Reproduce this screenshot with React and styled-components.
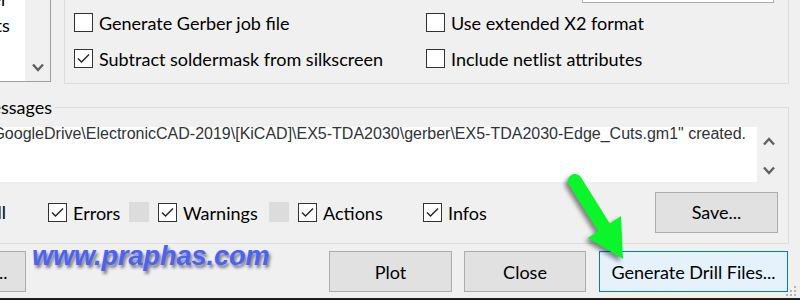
import React from 'react';
import styled, { createGlobalStyle } from 'styled-components';

const GlobalStyle = createGlobalStyle`
	html, body {
		margin: 0;
		padding: 0;
	}
	body {
		background: #f0f0f0;
		font-family: Lato, "Noto Sans", sans-serif;
		overflow: hidden;
	}
`;

const Dialog = styled.div`
	position: relative;
	width: 800px;
	height: 300px;
	box-sizing: border-box;
	border-bottom: 2px solid #1c1c1c;
	background: #f0f0f0;
	overflow: hidden;
	font-size: 18px;
	color: #000;
`;

const TopRow = styled.div`
	display: flex;
	align-items: flex-start;
	height: 84px;
`;

const ListBox = styled.div`
	flex: none;
	display: flex;
	width: 51px;
	height: 82px;
	box-sizing: border-box;
	border-right: 1px solid #a0a0a0;
	border-bottom: 1px solid #a0a0a0;
	background: #fff;
`;

const ListItems = styled.div`
	flex: 1;
	overflow: hidden;
`;

const ListItem = styled.div`
	margin-left: ${(props) => props.$shift}px;
	margin-top: ${(props) => props.$top || 0}px;
	height: 26px;
	line-height: 26px;
	white-space: nowrap;
`;

const ListScroll = styled.div`
	width: 25px;
	background: #f0f0f0;
	display: flex;
	flex-direction: column;
	justify-content: flex-end;
	align-items: center;
	padding-bottom: 9px;
	box-sizing: border-box;
`;

const Options = styled.div`
	flex: none;
	display: flex;
	flex-direction: column;
	width: 725px;
	height: 84px;
	margin-left: 13px;
	box-sizing: border-box;
	border: 1px solid #dcdcdc;
	border-top: none;
`;

const InputStub = styled.div`
	width: 192px;
	height: 3px;
	margin-left: 517px;
	box-sizing: border-box;
	border: 1px solid #adadad;
	border-top: none;
	background: #fff;
`;

const OptionGrid = styled.div`
	display: grid;
	grid-template-columns: 352px auto;
	row-gap: 17px;
	margin-left: 9px;
	margin-top: 10px;
`;

const CheckRow = styled.label`
	display: flex;
	align-items: center;
	gap: 6px;
	height: 19px;
	line-height: 19px;
	white-space: nowrap;
	width: ${(props) => (props.$width ? `${props.$width}px` : 'auto')};
	flex: none;

	span.text {
		padding-top: 2px;
	}
`;

const Box = styled.span`
	flex: none;
	display: flex;
	align-items: center;
	justify-content: center;
	width: 19px;
	height: 19px;
	box-sizing: border-box;
	border: 1px solid #333;
	background: #fff;
`;

const Messages = styled.div`
	position: relative;
	width: 829px;
	height: 137px;
	margin-top: 23px;
	margin-left: -40px;
	box-sizing: border-box;
	border: 1px solid #dcdcdc;
`;

const Caption = styled.span`
	position: absolute;
	left: 14px;
	top: -12px;
	padding-right: 3px;
	line-height: 22px;
	background: #f0f0f0;
`;

const LogRow = styled.div`
	display: flex;
	height: 55px;
	margin-top: 19px;
`;

const LogText = styled.div`
	flex: 1;
	display: flex;
	justify-content: flex-end;
	overflow: hidden;
	padding-right: 11px;
	background: #fff;
	font-family: "Liberation Sans", Arial, sans-serif;
	font-size: 16px;
	line-height: 12px;
	color: #2e3338;
	white-space: nowrap;

	span {
		flex: none;
		padding-top: 1px;
	}
`;

const LogScroll = styled.div`
	width: 31px;
	display: flex;
	flex-direction: column;
	align-items: center;
	gap: 20px;
	padding-top: 10px;
	padding-right: 7px;
	box-sizing: border-box;
`;

const FilterRow = styled.div`
	display: flex;
	align-items: center;
	height: 60px;
`;

const AllLabel = styled.span`
	flex: none;
	width: 45px;
	text-align: right;
	white-space: nowrap;
	overflow: hidden;
	direction: rtl;
`;

const Spacer = styled.span`
	flex: none;
	width: ${(props) => props.$width}px;
`;

const GraySquare = styled.span`
	flex: none;
	width: 20px;
	height: 20px;
	margin-right: 9px;
	background: #dcdcdc;
`;

const Button = styled.button`
	flex: none;
	width: ${(props) => props.$width}px;
	height: 41px;
	margin-left: ${(props) => props.$gap || 0}px;
	padding: 0;
	box-sizing: border-box;
	border: 1px solid ${(props) => (props.$primary ? '#0078d7' : '#adadad')};
	background: ${(props) => (props.$primary ? '#e5f1fb' : '#e1e1e1')};
	font-family: Lato, "Noto Sans", sans-serif;
	font-size: 18px;
	color: #000;
	white-space: nowrap;
	overflow: hidden;
`;

const BottomRow = styled.div`
	display: flex;
	align-items: flex-start;
	height: 54px;
	padding-top: 7px;
	box-sizing: border-box;
`;

const Watermark = styled.span`
	flex: none;
	width: 240px;
	margin-left: 6px;
	margin-top: -10px;
	font-family: "Liberation Sans", Arial, sans-serif;
	font-weight: bold;
	font-style: italic;
	font-size: 27px;
	color: #4b62f2;
	text-shadow: 2px 3px 3px rgba(30, 30, 60, 0.55);
	white-space: nowrap;
`;

const Arrow = styled.svg`
	position: absolute;
	left: 555px;
	top: 165px;
	filter: drop-shadow(-3px 3px 2px rgba(0, 0, 0, 0.45));
	pointer-events: none;
`;

const Grip = styled.svg`
	position: absolute;
	right: 3px;
	bottom: 2px;
`;

const Check = () => (
	<svg width="15" height="13" viewBox="0 0 15 13">
		<polyline points="2,6.5 5.5,10 13,2.5" fill="none" stroke="#222" strokeWidth="1.4" />
	</svg>
);

const CheckBox = ({ checked, label, width }) => (
	<CheckRow $width={width}>
		<Box>{checked && <Check />}</Box>
		<span className="text">{label}</span>
	</CheckRow>
);

const Chevron = ({ up }) => (
	<svg width="12" height="9" viewBox="0 0 12 9">
		<polyline
			points={up ? '1,7.5 6,2 11,7.5' : '1,1.5 6,7 11,1.5'}
			fill="none"
			stroke="#606060"
			strokeWidth="2.4"
		/>
	</svg>
);

const App = () => {
	return (
		<Dialog>
			<GlobalStyle />
			<TopRow>
				<ListBox>
					<ListItems>
						<ListItem $shift={-72} $top={-14}>Eco2.User</ListItem>
						<ListItem $shift={-69}>Edge.Cuts</ListItem>
						<ListItem $shift={-90}>Margin</ListItem>
					</ListItems>
					<ListScroll>
						<Chevron />
					</ListScroll>
				</ListBox>
				<Options>
					<InputStub />
					<OptionGrid>
						<CheckBox label="Generate Gerber job file" />
						<CheckBox label="Use extended X2 format" />
						<CheckBox checked label="Subtract soldermask from silkscreen" />
						<CheckBox label="Include netlist attributes" />
					</OptionGrid>
				</Options>
			</TopRow>

			<Messages>
				<Caption>Messages</Caption>
				<LogRow>
					<LogText>
						<span>
							File "C:\Users\GoogleDrive\ElectronicCAD-2019\[KiCAD]\EX5-TDA2030\gerber\EX5-TDA2030-Edge_Cuts.gm1" created.
						</span>
					</LogText>
					<LogScroll>
						<Chevron up />
						<Chevron />
					</LogScroll>
				</LogRow>
				<FilterRow>
					<AllLabel>All</AllLabel>
					<Spacer $width={42} />
					<CheckBox checked label="Errors" width={81} />
					<GraySquare />
					<CheckBox checked label="Warnings" width={111} />
					<GraySquare />
					<CheckBox checked label="Actions" width={125} />
					<CheckBox checked label="Infos" width={60} />
					<Spacer $width={172} />
					<Button $width={123}>Save...</Button>
				</FilterRow>
			</Messages>

			<BottomRow>
				<Button $width={122} $gap={-96}>Run DRC...</Button>
				<Watermark>www.praphas.com</Watermark>
				<Button $width={123} $gap={57}>Plot</Button>
				<Button $width={122} $gap={12}>Close</Button>
				<Button $width={189} $gap={13} $primary>Generate Drill Files...</Button>
			</BottomRow>

			<Arrow width="80" height="105" viewBox="0 0 80 105">
				<line x1="20" y1="16" x2="50" y2="64" stroke="#0af52a" strokeWidth="14" strokeLinecap="round" />
				<polygon points="33,73 66,51 68,94" fill="#0af52a" />
			</Arrow>
			<Grip width="12" height="10" viewBox="0 0 12 10">
				<rect x="9" y="0" width="2" height="2" fill="#b5b5b5" />
				<rect x="5" y="4" width="2" height="2" fill="#b5b5b5" />
				<rect x="9" y="4" width="2" height="2" fill="#b5b5b5" />
				<rect x="1" y="8" width="2" height="2" fill="#b5b5b5" />
				<rect x="5" y="8" width="2" height="2" fill="#b5b5b5" />
				<rect x="9" y="8" width="2" height="2" fill="#b5b5b5" />
			</Grip>
		</Dialog>
	);
};

export default App;
